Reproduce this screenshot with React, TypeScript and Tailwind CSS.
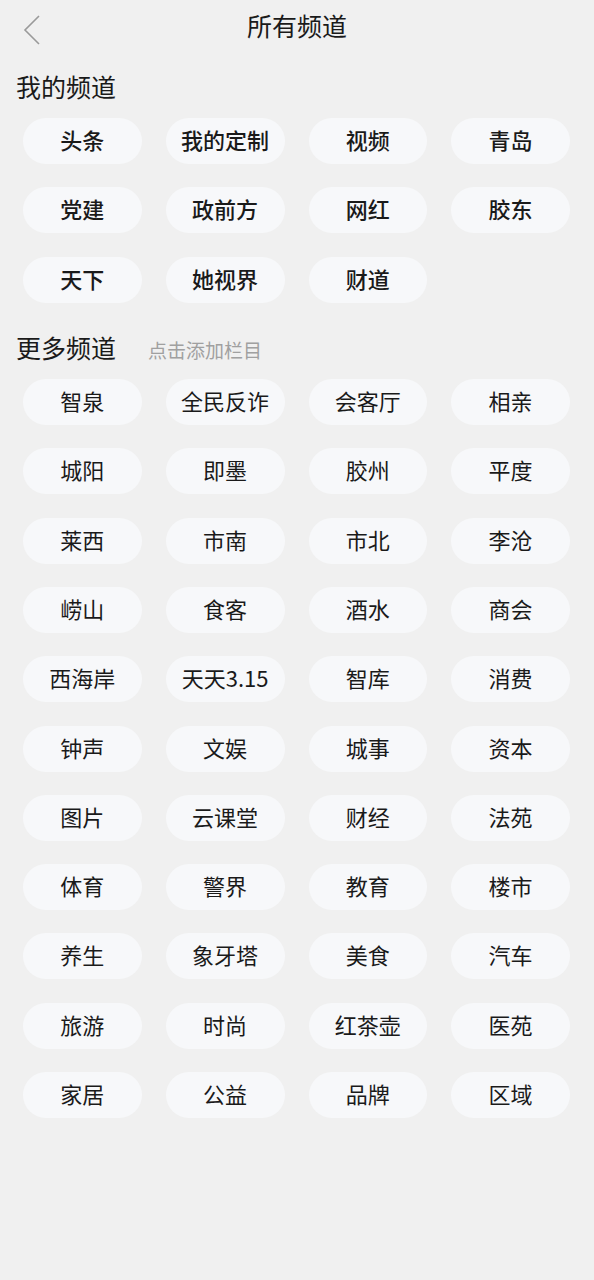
const mine = ["头条", "我的定制", "视频", "青岛", "党建", "政前方", "网红", "胶东", "天下", "她视界", "财道"];

const more = [
  "智泉", "全民反诈", "会客厅", "相亲",
  "城阳", "即墨", "胶州", "平度",
  "莱西", "市南", "市北", "李沧",
  "崂山", "食客", "酒水", "商会",
  "西海岸", "天天3.15", "智库", "消费",
  "钟声", "文娱", "城事", "资本",
  "图片", "云课堂", "财经", "法苑",
  "体育", "警界", "教育", "楼市",
  "养生", "象牙塔", "美食", "汽车",
  "旅游", "时尚", "红茶壶", "医苑",
  "家居", "公益", "品牌", "区域",
];

function Pill({ name, strong }: { name: string; strong?: boolean }) {
  return (
    <div
      className={
        "flex h-[46px] items-center justify-center rounded-full bg-[#f7f8fa] pb-[3px] text-[22px] text-[#1a1a1a] " +
        (strong ? "font-medium" : "font-normal")
      }
    >
      {name}
    </div>
  );
}

export default function App() {
  return (
    <div
      className="min-h-[1280px] w-full bg-[#f0f0f0]"
      style={{ fontFamily: '"Noto Sans CJK SC", "Noto Sans", sans-serif' }}
    >
      {/* 顶部标题栏 */}
      <header className="relative flex h-[52px] items-center justify-center">
        <button type="button" aria-label="返回" className="absolute left-[18px] top-[10px] p-1">
          <svg width="20" height="32" viewBox="0 0 20 32" fill="none">
            <polyline points="17,2 3,16 17,30" stroke="#9a9a9a" strokeWidth="1.6" strokeLinejoin="miter" />
          </svg>
        </button>
        <h1 className="pb-[2px] text-[25px] leading-none text-[#1a1a1a]">所有频道</h1>
      </header>

      {/* 我的频道 */}
      <h2 className="mt-[18px] pl-[16px] text-[25px] leading-[32px] text-[#1a1a1a]">我的频道</h2>
      <div className="mt-[16px] grid grid-cols-4 gap-x-[24px] gap-y-[23.3px] pl-[23px] pr-[24px]">
        {mine.map((n) => (
          <Pill key={n} name={n} strong />
        ))}
      </div>

      {/* 更多频道 */}
      <div className="mt-[28px] flex items-baseline gap-[32px] pl-[16px]">
        <h2 className="text-[25px] leading-[32px] text-[#1a1a1a]">更多频道</h2>
        <span className="text-[19px] text-[#a0a0a0]">点击添加栏目</span>
      </div>
      <div className="mt-[15px] grid grid-cols-4 gap-x-[24px] gap-y-[23.3px] pl-[23px] pr-[24px]">
        {more.map((n) => (
          <Pill key={n} name={n} />
        ))}
      </div>
    </div>
  );
}
